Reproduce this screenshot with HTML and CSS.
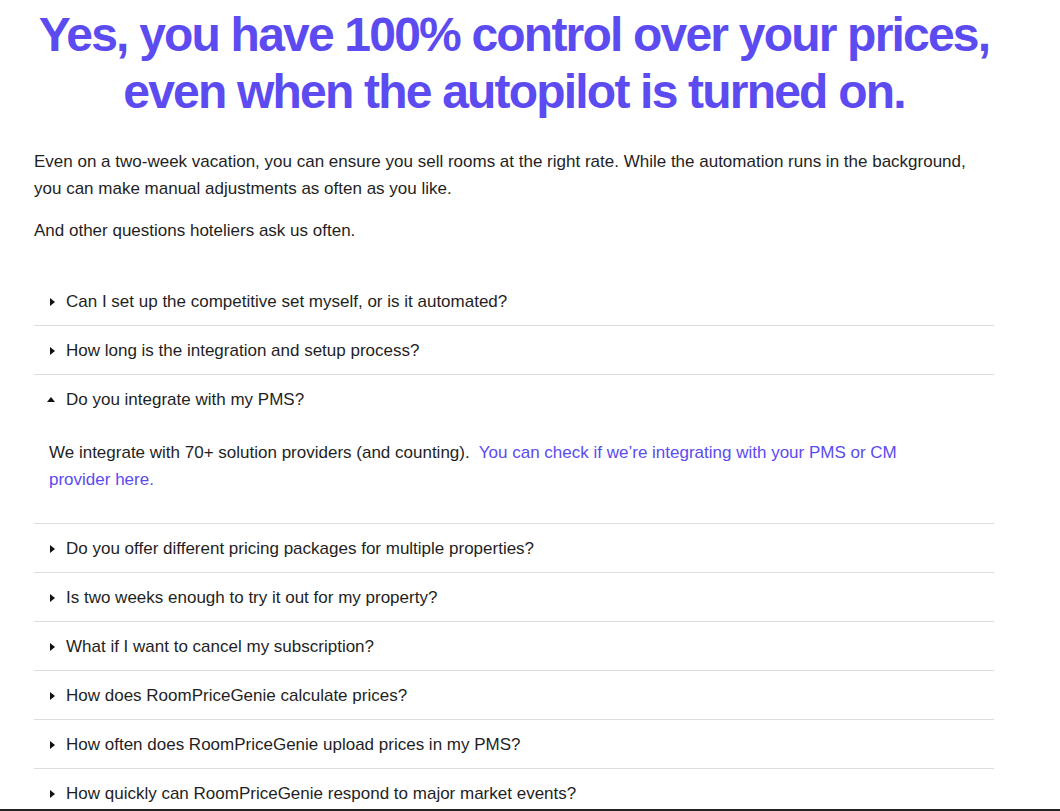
FILE: index.html
```html
<!DOCTYPE html>
<html lang="en">
<head>
  <meta charset="UTF-8">
  <meta name="viewport" content="width=device-width, initial-scale=1.0">
  <title>FAQ</title>
  <link rel="stylesheet" href="styles.css">
</head>
<body>

  <section class="faq">
    <h1 class="faq-title">Yes, you have 100% control over your prices,<br>even when the autopilot is turned on.</h1>

    <p class="intro">Even on a two-week vacation, you can ensure you sell rooms at the right rate. While the automation runs in the background, you can make manual adjustments as often as you like.</p>
    <p class="intro">And other questions hoteliers ask us often.</p>

    <div class="faq-list">
      <details>
        <summary>Can I set up the competitive set myself, or is it automated?</summary>
      </details>
      <details>
        <summary>How long is the integration and setup process?</summary>
      </details>
      <details open>
        <summary>Do you integrate with my PMS?</summary>
        <div class="answer">
          We integrate with 70+ solution providers (and counting).&nbsp; <a href="#">You can check if we’re integrating with your PMS or CM provider here.</a>
        </div>
      </details>
      <details>
        <summary>Do you offer different pricing packages for multiple properties?</summary>
      </details>
      <details>
        <summary>Is two weeks enough to try it out for my property?</summary>
      </details>
      <details>
        <summary>What if I want to cancel my subscription?</summary>
      </details>
      <details>
        <summary>How does RoomPriceGenie calculate prices?</summary>
      </details>
      <details>
        <summary>How often does RoomPriceGenie upload prices in my PMS?</summary>
      </details>
      <details>
        <summary>How quickly can RoomPriceGenie respond to major market events?</summary>
      </details>
    </div>
  </section>

  <div class="bottom-line"></div>

</body>
</html>
```

FILE: styles.css
```css
body {
  margin: 0;
  background: #fff;
  color: #1f1f1f;
  font-family: "Liberation Sans", Arial, sans-serif;
}
.faq {
  width: 960px;
  margin-left: 34px;
}
.faq-title {
  margin: 6px 0 28px;
  text-align: center;
  color: #5b4bf0;
  font-size: 48px;
  line-height: 57px;
  font-weight: bold;
  letter-spacing: -1.8px;
  white-space: nowrap;
}
.intro {
  margin: 0 0 15px;
  font-size: 17px;
  line-height: 27px;
}
.faq-list {
  margin-top: 33px;
}
.faq-list details {
  border-bottom: 1px solid #ddd;
}
.faq-list summary {
  display: block;
  list-style: none;
  padding: 11px 0 10px 16px;
  font-size: 17px;
  line-height: 27px;
  cursor: pointer;
}
.faq-list summary::-webkit-details-marker {
  display: none;
}
.faq-list summary::before {
  content: "";
  display: inline-block;
  width: 0;
  height: 0;
  margin-right: 11px;
  vertical-align: 1px;
  border-left: 5px solid #111;
  border-top: 4.5px solid transparent;
  border-bottom: 4.5px solid transparent;
}
.faq-list details[open] summary::before {
  margin-left: -3px;
  vertical-align: 3px;
  border-left: 4px solid transparent;
  border-right: 4px solid transparent;
  border-top: 0;
  border-bottom: 5px solid #111;
}
.answer {
  padding: 16px 60px 30px 15px;
  font-size: 17px;
  line-height: 27px;
}
.answer a {
  color: #5b4bf0;
  text-decoration: none;
}
.bottom-line {
  position: fixed;
  left: 0;
  right: 0;
  bottom: 0;
  height: 2px;
  background: #222;
}
```
